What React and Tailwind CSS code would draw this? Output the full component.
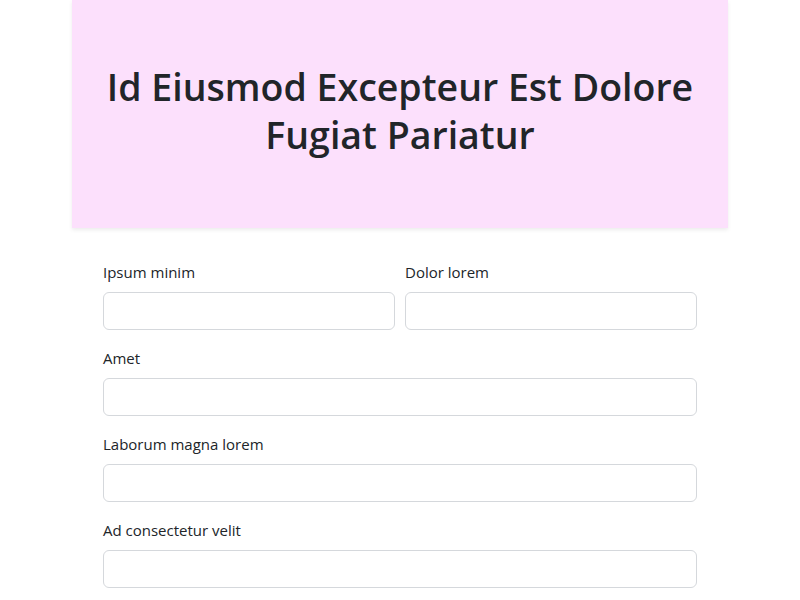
const rows = [
  [{ id: "ipsum", label: "Ipsum minim" }, { id: "dolor", label: "Dolor lorem" }],
  [{ id: "amet", label: "Amet" }],
  [{ id: "laborum", label: "Laborum magna lorem" }],
  [{ id: "ad", label: "Ad consectetur velit" }],
];

function Field({ id, label }) {
  return (
    <div className="flex-1 min-w-0">
      <label htmlFor={id} className="block mb-2 text-[15px] leading-6 text-[#212529]">
        {label}
      </label>
      <input
        id={id}
        type="text"
        className="block w-full h-[38px] px-3 rounded-md border border-[#d5d8dc] bg-white outline-none"
      />
    </div>
  );
}

export default function App() {
  return (
    <div className="min-h-screen bg-white font-['Open_Sans',sans-serif] text-[#212529]">
      <header className="w-[656px] mx-auto bg-[#fce0fc] shadow-[0_2px_4px_rgba(0,0,0,0.08)] pt-[63px] pb-[69px] px-6">
        <h1 className="text-center text-[37.5px] leading-[48px] font-semibold">
          Id Eiusmod Excepteur Est Dolore Fugiat Pariatur
        </h1>
      </header>

      <form className="w-[594px] mx-auto pt-8">
        {rows.map((row, i) => (
          <div key={i} className="flex gap-[10px] mb-4">
            {row.map((f) => (
              <Field key={f.id} {...f} />
            ))}
          </div>
        ))}
      </form>
    </div>
  );
}
